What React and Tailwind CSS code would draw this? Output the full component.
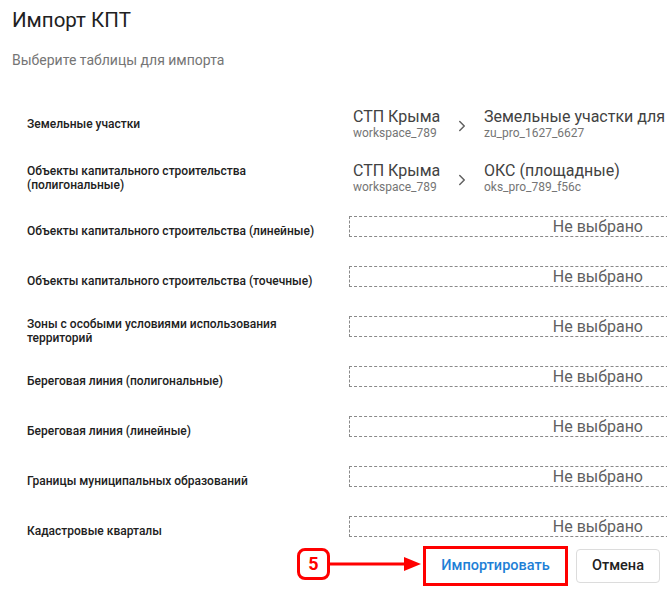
import { ChevronRight } from "lucide-react";

const rows = [
    {
        label: "Земельные участки",
        source: { name: "СТП Крыма", ws: "workspace_789" },
        target: { name: "Земельные участки для", table: "zu_pro_1627_6627" },
        h: "h-[52px]",
    },
    {
        label: "Объекты капитального строительства (полигональные)",
        source: { name: "СТП Крыма", ws: "workspace_789" },
        target: { name: "ОКС (площадные)", table: "oks_pro_789_f56c" },
        h: "h-[56px]",
    },
    { label: "Объекты капитального строительства (линейные)" },
    { label: "Объекты капитального строительства (точечные)" },
    { label: "Зоны с особыми условиями использования территорий" },
    { label: "Береговая линия (полигональные)" },
    { label: "Береговая линия (линейные)" },
    { label: "Границы муниципальных образований" },
    { label: "Кадастровые кварталы" },
];

const Mapping = ({ source, target }) => (
    <div className="flex items-center pl-[4px] whitespace-nowrap">
        <div className="w-[98px] flex flex-col">
            <span className="text-[16px] leading-[18px] text-[#424242]">{source.name}</span>
            <span className="text-[12px] leading-[14px] text-[#757575]">{source.ws}</span>
        </div>
        <div className="w-[22px] flex justify-center mt-[3px] text-[#616161]">
            <ChevronRight size={18} strokeWidth={2} />
        </div>
        <div className="ml-[11px] flex flex-col">
            <span className="text-[16px] leading-[18px] text-[#424242]">{target.name}</span>
            <span className="text-[12px] leading-[14px] text-[#757575]">{target.table}</span>
        </div>
    </div>
);

const Empty = () => (
    <div className="w-[340px] shrink-0 h-[21px] mb-[10px] border border-dashed border-[#8a8a8a] flex justify-end pr-[45px]">
        <span className="text-[16px] leading-[19px] text-[#5f5f5f]">Не выбрано</span>
    </div>
);

export default function App() {
    return (
        <div className="relative w-[667px] h-[593px] overflow-hidden bg-white font-['Roboto',sans-serif]">
            <div className="px-3 pt-[8px]">
                <h1 className="text-[20.5px] leading-[24px] text-[#212121]">Импорт КПТ</h1>
                <p className="mt-[18px] text-[14px] leading-[20px] text-[#757575]">
                    Выберите таблицы для импорта
                </p>
            </div>

            <div className="mt-[28px] pl-[27px] flex flex-col">
                {rows.map((r, i) => (
                    <div key={i} className={`flex items-center ${r.h || "h-[50px]"}`}>
                        <div className="w-[322px] shrink-0 pr-[20px] text-[12px] leading-[14px] font-medium text-[#212121]">
                            {r.label}
                        </div>
                        {r.source ? <Mapping source={r.source} target={r.target} /> : <Empty />}
                    </div>
                ))}
            </div>

            <div className="-mt-[10px] h-[40px] flex items-center justify-end gap-[8px] pr-[7px]">
                <div className="w-[145px] h-[40px] border-[3px] border-[#ff0000] flex items-center">
                    <button className="w-full h-[34px] text-[14.5px] font-medium text-[#1e7fd6]">
                        Импортировать
                    </button>
                </div>
                <button className="w-[84px] h-[34px] rounded-[4px] border border-[#dcdcdc] text-[14.5px] font-medium text-[#212121]">
                    Отмена
                </button>
            </div>

            <div className="absolute left-[297px] top-[548px] w-[33px] h-[32px] rounded-[8px] border-[3px] border-[#ff0000] flex items-center justify-center">
                <span className="text-[18px] font-bold leading-none text-[#ff0000]">5</span>
            </div>
            <svg className="absolute left-[330px] top-[556px]" width="92" height="16" viewBox="0 0 92 16">
                <line x1="0" y1="8" x2="78" y2="8" stroke="#ff0000" strokeWidth="3" />
                <polygon points="74,1 91,8 74,15" fill="#ff0000" />
            </svg>
        </div>
    );
}
